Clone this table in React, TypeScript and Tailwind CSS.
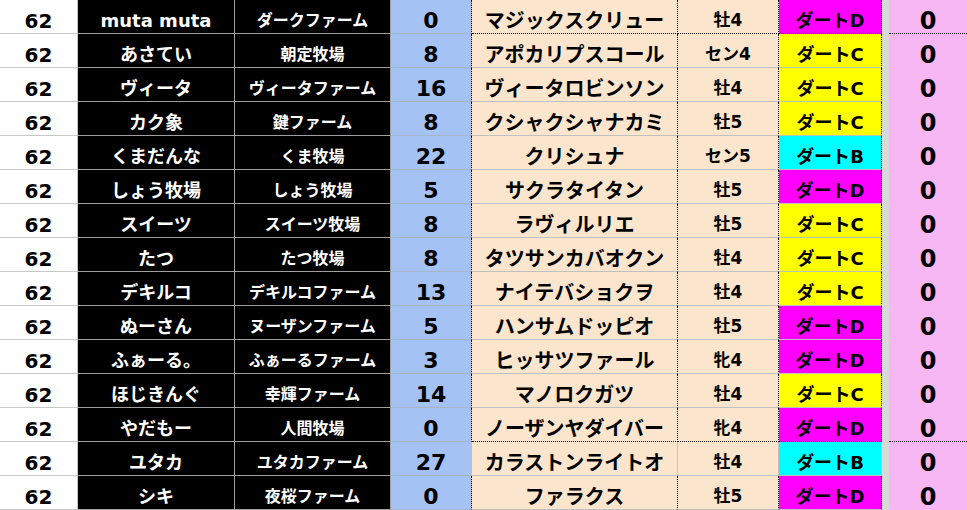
import React from "react";

type Row = {
  owner: string;
  farm: string;
  pts: string;
  horse: string;
  sex: string;
  cls: "B" | "C" | "D";
  dotted: boolean;
  bottomDotted: boolean;
};

const rows: Row[] = [
  { owner: "muta muta", farm: "ダークファーム", pts: "0", horse: "マジックスクリュー", sex: "牡4", cls: "D", dotted: true, bottomDotted: true },
  { owner: "あさてい", farm: "朝定牧場", pts: "8", horse: "アポカリプスコール", sex: "セン4", cls: "C", dotted: true, bottomDotted: false },
  { owner: "ヴィータ", farm: "ヴィータファーム", pts: "16", horse: "ヴィータロビンソン", sex: "牡4", cls: "C", dotted: true, bottomDotted: false },
  { owner: "カク象", farm: "鍵ファーム", pts: "8", horse: "クシャクシャナカミ", sex: "牡5", cls: "C", dotted: true, bottomDotted: false },
  { owner: "くまだんな", farm: "くま牧場", pts: "22", horse: "クリシュナ", sex: "セン5", cls: "B", dotted: true, bottomDotted: false },
  { owner: "しょう牧場", farm: "しょう牧場", pts: "5", horse: "サクラタイタン", sex: "牡5", cls: "D", dotted: true, bottomDotted: false },
  { owner: "スイーツ", farm: "スイーツ牧場", pts: "8", horse: "ラヴィルリエ", sex: "牡5", cls: "C", dotted: true, bottomDotted: false },
  { owner: "たつ", farm: "たつ牧場", pts: "8", horse: "タツサンカバオクン", sex: "牡4", cls: "C", dotted: true, bottomDotted: false },
  { owner: "デキルコ", farm: "デキルコファーム", pts: "13", horse: "ナイテバショクヲ", sex: "牡4", cls: "C", dotted: true, bottomDotted: false },
  { owner: "ぬーさん", farm: "ヌーザンファーム", pts: "5", horse: "ハンサムドッピオ", sex: "牡5", cls: "D", dotted: true, bottomDotted: false },
  { owner: "ふぁーる。", farm: "ふぁーるファーム", pts: "3", horse: "ヒッサツファール", sex: "牝4", cls: "D", dotted: true, bottomDotted: false },
  { owner: "ほじきんぐ", farm: "幸輝ファーム", pts: "14", horse: "マノロクガツ", sex: "牡4", cls: "C", dotted: true, bottomDotted: false },
  { owner: "やだもー", farm: "人間牧場", pts: "0", horse: "ノーザンヤダイバー", sex: "牝4", cls: "D", dotted: true, bottomDotted: true },
  { owner: "ユタカ", farm: "ユタカファーム", pts: "27", horse: "カラストンライトオ", sex: "牡4", cls: "B", dotted: false, bottomDotted: false },
  { owner: "シキ", farm: "夜桜ファーム", pts: "0", horse: "ファラクス", sex: "牡5", cls: "D", dotted: true, bottomDotted: false },
];

const clsBg: Record<Row["cls"], string> = {
  B: "bg-[#00ffff]",
  C: "bg-[#ffff00]",
  D: "bg-[#ff00ff]",
};

const base =
  "flex items-center justify-center pt-[8px] font-bold whitespace-nowrap overflow-hidden border-b border-r";

export default function App() {
  return (
    <div className="w-[967px] h-[510px] overflow-hidden bg-white font-['DejaVu_Sans','Noto_Sans_CJK_JP',sans-serif]">
      <div className="grid grid-cols-[78px_157px_156px_81px_206px_101px_103px_7px_78px] auto-rows-[34px]">
        {rows.map((r, i) => {
          const right = r.dotted
            ? "border-r-black [border-right-style:dotted]"
            : "border-r-[#c0c0c0] [border-right-style:solid]";
          const bottom = r.bottomDotted
            ? "border-b-black [border-bottom-style:dotted]"
            : "border-b-[#c0c0c0] [border-bottom-style:solid]";
          return (
            <React.Fragment key={i}>
              <div className={`${base} border-[#c8c8c8] bg-white text-black text-[20px]`}>62</div>
              <div className={`${base} border-[#a0a0a0] bg-black text-white text-[18px]`}>{r.owner}</div>
              <div className={`${base} border-[#a0a0a0] bg-black text-white text-[16px]`}>{r.farm}</div>
              <div className={`${base} bg-[#a4c2f4] text-black text-[22px] border-b-[#a8b4cc] ${right}`}>
                {r.pts}
              </div>
              <div className={`${base} bg-[#fce5cd] text-black text-[20px] ${right} ${bottom}`}>{r.horse}</div>
              <div className={`${base} bg-[#fce5cd] text-black text-[17px] ${right} ${bottom}`}>{r.sex}</div>
              <div className={`${base} ${clsBg[r.cls]} text-black text-[18px] ${right} ${bottom}`}>
                ダート{r.cls}
              </div>
              <div className="bg-[#d9d9d9]" />
              <div
                className={`flex items-center justify-center pt-[8px] font-bold border-b bg-[#f7b7f2] text-black text-[24px] ${
                  r.bottomDotted
                    ? "border-b-black [border-bottom-style:dotted]"
                    : "border-b-[#f7b7f2] [border-bottom-style:solid]"
                }`}
              >
                0
              </div>
            </React.Fragment>
          );
        })}
      </div>
    </div>
  );
}
